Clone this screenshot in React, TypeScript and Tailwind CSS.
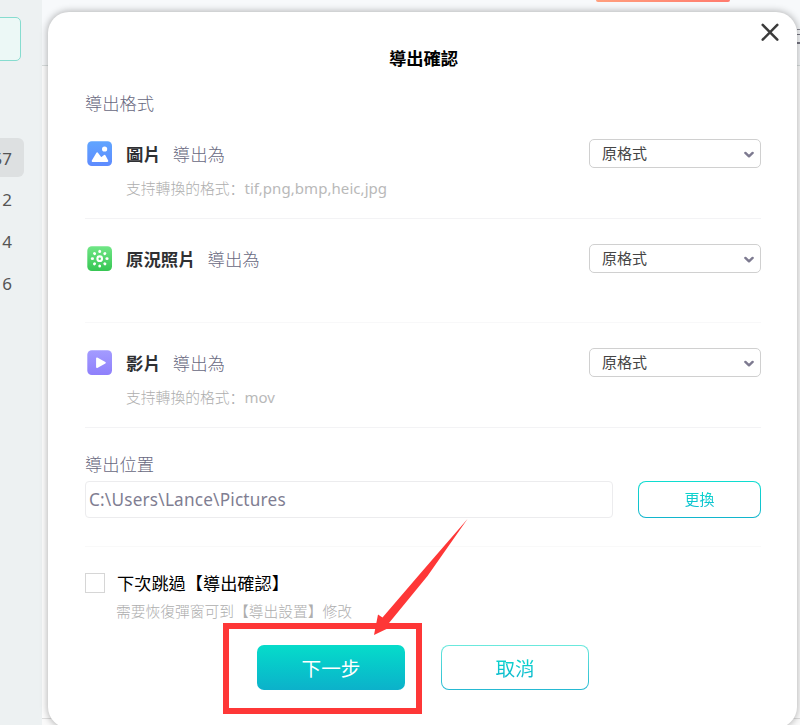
import React from "react";

function ImageIcon() {
  return (
    <svg width="26" height="26" viewBox="0 0 26 26" className="shrink-0">
      <defs>
        <linearGradient id="blue" x1="0" y1="0" x2="0" y2="1">
          <stop offset="0" stopColor="#60a5ff" />
          <stop offset="1" stopColor="#5e8bff" />
        </linearGradient>
      </defs>
      <rect x="0.3" y="0.3" width="24.7" height="24.7" rx="4.5" fill="url(#blue)" />
      <path d="M5.6 20 L10.2 12.2 L14 17.4 L17.6 14.8 L20.4 20 Z" fill="#fff" stroke="#fff" strokeWidth="1.8" strokeLinejoin="round" />
      <circle cx="17.6" cy="8" r="2.6" fill="#fff" />
    </svg>
  );
}

function LiveIcon() {
  return (
    <svg width="26" height="26" viewBox="0 0 26 26" className="shrink-0">
      <defs>
        <linearGradient id="green" x1="0" y1="0" x2="0" y2="1">
          <stop offset="0" stopColor="#70e686" />
          <stop offset="1" stopColor="#36c653" />
        </linearGradient>
      </defs>
      <rect x="0.3" y="0.3" width="24.7" height="24.7" rx="4.5" fill="url(#green)" />
      <circle cx="12.7" cy="12.7" r="2.3" fill="none" stroke="#fff" strokeWidth="2.1" />
      <g fill="#fff">
        {[0, 45, 90, 135, 180, 225, 270, 315].map((a) => (
          <ellipse key={a} cx="12.7" cy="5.4" rx="1.4" ry="1.6" transform={`rotate(${a} 12.7 12.7)`} />
        ))}
      </g>
    </svg>
  );
}

function VideoIcon() {
  return (
    <svg width="26" height="26" viewBox="0 0 26 26" className="shrink-0">
      <defs>
        <linearGradient id="violet" x1="0" y1="0" x2="0" y2="1">
          <stop offset="0" stopColor="#a39bff" />
          <stop offset="1" stopColor="#8f80fb" />
        </linearGradient>
      </defs>
      <rect x="0.3" y="0.3" width="24.7" height="24.7" rx="4.5" fill="url(#violet)" />
      <path d="M9.9 8.2 L18 12.7 L9.9 17.2 Z" fill="#fff" stroke="#fff" strokeWidth="1.6" strokeLinejoin="round" />
    </svg>
  );
}

function FormatSelect() {
  return (
    <div className="flex h-[29px] w-[172px] items-center justify-between rounded-[5px] border border-[#d0d0d0] bg-white pr-[6px] pl-[12px]">
      <span className="text-[15px] leading-none text-[#444]">原格式</span>
      <svg width="10" height="8" viewBox="0 0 10 8" className="mt-[2px]">
        <path d="M1.4 1.9 L5 5.3 L8.6 1.9" fill="none" stroke="#7d7a90" strokeWidth="2.4" strokeLinecap="round" strokeLinejoin="round" />
      </svg>
    </div>
  );
}

type SectionProps = { icon: React.ReactNode; name: string; hint?: string; className: string };

function FormatSection({ icon, name, hint, className }: SectionProps) {
  return (
    <section className={className}>
      <div className="flex h-[29px] items-center">
        <div className="ml-[2px]">{icon}</div>
        <span className="mt-[1px] ml-[13px] text-[17.4px] font-bold text-[#2f3033]">{name}</span>
        <span className="mt-[1px] ml-[12px] text-[17.4px] font-light text-[#68687e]">導出為</span>
        <div className="ml-auto">
          <FormatSelect />
        </div>
      </div>
      {hint && (
        <p className="mt-[10px] ml-[41px] flex h-[20px] text-[14.8px] leading-[20px] font-light whitespace-nowrap text-[#aeaeae]">
          <span>支持轉換的格式</span>
          <span className="font-['Noto_Sans_CJK_SC',sans-serif]" lang="zh-CN">：</span>
          <span className="text-[15px] font-normal tracking-[0.06px] text-[#b9b9b9]">{hint}</span>
        </p>
      )}
    </section>
  );
}

export default function App() {
  return (
    <div className="relative flex h-[725px] w-[800px] overflow-hidden bg-[#fafafa] font-['Noto_Sans','Noto_Sans_CJK_TC',sans-serif]">
      <aside className="flex w-[42px] shrink-0 flex-col bg-[#edf1f2] pt-[17px]">
        <div className="-ml-[6px] h-[44px] w-[27px] rounded-[5px] border border-[#86dccf] bg-[#ecf8f6]" />
        <div className="mt-[77px] flex h-[39px] w-[24px] items-center justify-end rounded-r-[6px] bg-[#dde0e1] pt-[2px] pr-[12px] text-[17px] text-[#555]">57</div>
        {["2", "4", "6"].map((n) => (
          <div key={n} className="mt-[2px] flex h-[40px] w-[24px] items-center justify-end pt-[2px] pr-[12px] text-[17px] text-[#555]">{n}</div>
        ))}
      </aside>
      <main className="flex grow flex-col">
        <div className="flex h-[66px] justify-end border-b border-[#d9dede] bg-[#f7f9fb]">
          <div className="mr-[70px] h-[2px] w-[134px] rounded-b-[2px] bg-linear-to-r from-[#ff9f7e] to-[#ff7b6e]" />
        </div>
        <div className="h-[653px] border-b border-[#dedede] bg-[#fdfdfd]" />
      </main>
      <div className="absolute top-[29px] right-0 flex w-[3px] flex-col">
        <i className="h-px bg-[#8b8b95]" />
        <i className="mt-[4px] h-px bg-[#777783]" />
        <i className="mt-[7px] h-[2px] bg-[#777783]" />
      </div>

      <div className="absolute top-[12px] left-[48px] h-[716px] w-[749px] rounded-[21px] bg-white pr-[36px] pl-[37px] shadow-[0_0_7px_1px_rgba(0,0,0,0.28)]">
        <svg width="20" height="20" viewBox="0 0 20 20" className="absolute top-[10px] right-[17px]">
          <path d="M2.7 2.9 L17.3 17.7 M17.3 2.9 L2.7 17.7" stroke="#3b3b3b" strokeWidth="2.5" strokeLinecap="round" />
        </svg>
        <h1 className="pt-[34px] pl-[1px] text-center text-[17.3px] leading-[26px] font-bold text-black">導出確認</h1>
        <h2 className="mt-[18px] h-[28px] text-[17.3px] leading-[28px] font-light text-[#68687e]">導出格式</h2>
        <FormatSection className="h-[101px] border-b border-[#f3f3f5] pt-[21px]" icon={<ImageIcon />} name="圖片" hint="tif,png,bmp,heic,jpg" />
        <FormatSection className="h-[104px] border-b border-[#f8f8f9] pt-[25px]" icon={<LiveIcon />} name="原況照片" />
        <FormatSection className="h-[105px] border-b border-[#f3f3f5] pt-[25px]" icon={<VideoIcon />} name="影片" hint="mov" />
        <h2 className="mt-[23px] h-[28px] text-[17.3px] leading-[28px] font-light text-[#68687e]">導出位置</h2>
        <div className="mt-[2px] flex h-[66px] items-start justify-between border-b border-[#f9f9f9]">
          <div className="flex h-[37px] w-[528px] items-center rounded-[4px] border border-[#ececee] pl-[3px] text-[17.2px] tracking-[0.2px] text-[#7f7e92]">C:\Users\Lance\Pictures</div>
          <button className="flex h-[37px] w-[123px] items-center justify-center rounded-[8px] border border-transparent [background:linear-gradient(#fff,#fff)_padding-box,linear-gradient(#10ddd0,#12b5cd)_border-box]">
            <span className="bg-linear-to-b from-[#0cdccb] to-[#0fb8d0] bg-clip-text text-[15px] text-transparent">更換</span>
          </button>
        </div>
        <div className="mt-[24px] flex h-[24px] items-center">
          <span className="h-[20px] w-[20px] border border-[#d6d6d6]" />
          <span className="mt-[1px] ml-[12px] text-[17.2px] whitespace-nowrap text-black">下次跳過【導出確認】</span>
        </div>
        <p className="mt-[6px] ml-[31px] h-[20px] text-[14.75px] leading-[20px] font-light text-[#aeaeae]">需要恢復彈窗可到【導出設置】修改</p>
        <div className="mt-[24px] flex justify-center gap-[36px]">
          <button className="h-[45px] w-[148px] rounded-[7px] bg-linear-to-b from-[#07dcca] to-[#0cb1ca] pt-[2px] text-[19.6px] text-white">下一步</button>
          <button className="flex h-[45px] w-[148px] items-center justify-center rounded-[8px] border border-transparent pt-[2px] [background:linear-gradient(#fff,#fff)_padding-box,linear-gradient(#6be9dd,#25b9d2)_border-box]">
            <span className="bg-linear-to-b from-[#0cdccb] to-[#0fb1cf] bg-clip-text text-[19.6px] text-transparent">取消</span>
          </button>
        </div>
      </div>

      <div className="absolute top-[623px] left-[223px] h-[91px] w-[199px] border-[6px] border-[#fe3737]" />
      <svg width="100" height="120" viewBox="370 516 100 120" className="absolute top-[516px] left-[370px]">
        <path d="M467.5 519 L427.5 576 L389 623 L386.5 629 L374 635 L378 614.5 L382.5 617.5 L422 571.5 Z" fill="#fe3737" />
      </svg>
    </div>
  );
}
